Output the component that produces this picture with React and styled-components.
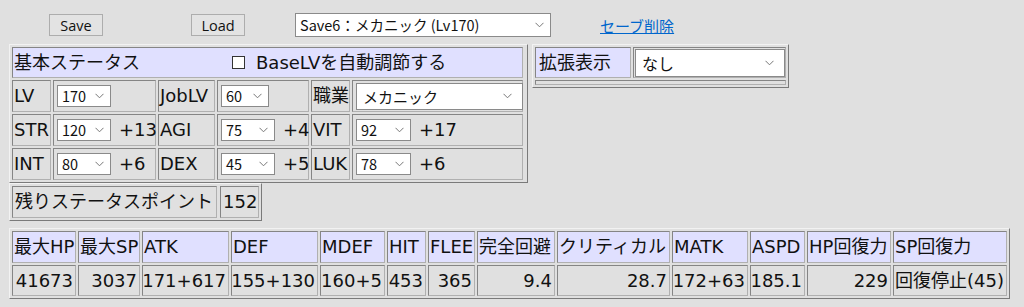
import React from 'react'
import styled, { createGlobalStyle, css } from 'styled-components'

const GlobalStyle = createGlobalStyle`
  body {
    margin: 0;
    background: #e0e0e0;
    font-family: "DejaVu Sans", "Noto Sans CJK JP", sans-serif;
    color: #111;
  }
`

// cell / table borders in the old border="1" look
const insetBorder = css`
  border: 1px solid;
  border-color: #858585 #b0b0b0 #b0b0b0 #858585;
`
const outsetBorder = css`
  border: 1px solid;
  border-color: #f2f2f2 #7a7a7a #7a7a7a #f2f2f2;
`

const Page = styled.div`
  padding-top: 13px;
`

const TopBar = styled.div`
  display: flex;
  align-items: center;
  height: 24px;
  padding-left: 49px;
`

const Button = styled.button`
  box-sizing: border-box;
  width: 54px;
  height: 22px;
  margin-right: ${p => p.gap}px;
  padding: 0;
  background: #e3e3e3;
  border: 1px solid #adadad;
  font-family: "Open Sans", sans-serif;
  font-size: 14.5px;
  color: #111;
`

const SelectBox = styled.div`
  box-sizing: border-box;
  display: flex;
  align-items: center;
  justify-content: space-between;
  width: ${p => p.w}px;
  height: ${p => p.h}px;
  padding: 0 ${p => (p.big ? 10 : 6)}px 0 ${p => (p.big ? 6 : 4)}px;
  background: #fff;
  border: 1px solid #8a8a8a;
  font-family: ${p => (p.num ? '"DejaVu Sans"' : '"Noto Sans CJK JP"')}, sans-serif;
  font-size: ${p => p.fs}px;
  line-height: 1;
  white-space: nowrap;
  flex-shrink: 0;
`

const Chevron = () => (
  <svg width="9" height="6" viewBox="0 0 9 6">
    <polyline points="0.5,0.8 4.5,4.8 8.5,0.8" fill="none" stroke="#777" strokeWidth="1" />
  </svg>
)

const Select = ({ value, w, h = 22, fs = 14.5, num, big }) => (
  <SelectBox w={w} h={h} fs={fs} num={num} big={big}>
    <span>{value}</span>
    <Chevron />
  </SelectBox>
)

const Link = styled.a`
  margin-left: 49px;
  color: #0066cc;
  text-decoration: underline;
  font-family: "Noto Sans CJK JP", sans-serif;
  font-size: 15px;
  cursor: pointer;
`

const Row = styled.div`
  display: flex;
  align-items: flex-start;
  gap: 4px;
  margin-top: 7px;
  padding-left: 9px;
`

const Column = styled.div`
  display: flex;
  flex-direction: column;
  align-items: flex-start;
`

const Panel = styled.div`
  ${outsetBorder};
  display: grid;
  grid-template-columns: ${p => p.cols};
  grid-template-rows: ${p => p.rows};
  gap: 2px ${p => p.colGap || 2}px;
  padding: 2px ${p => p.padRight || 2}px 2px 2px;
  font-size: 18px;
`

const Cell = styled.div`
  ${insetBorder};
  box-sizing: border-box;
  display: flex;
  align-items: center;
  gap: ${p => p.gap || 0}px;
  padding: 0 ${p => p.padR || 1}px 0 ${p => p.padL || 1}px;
  background: ${p => (p.head ? '#e0e0ff' : 'transparent')};
  justify-content: ${p => (p.right ? 'flex-end' : 'flex-start')};
  white-space: nowrap;
  line-height: 1;
  grid-column: ${p => p.span || 'auto'};
`

const Checkbox = styled.span`
  box-sizing: border-box;
  display: inline-block;
  width: 13px;
  height: 13px;
  margin: 0 11px 0 92px;
  background: #fff;
  border: 1px solid #333;
`

const statRows = [
  [['LV', <Select value="170" w={54} />], ['JobLV', <Select value="60" w={48} />], ['職業', null]],
  [['STR', <Select value="120" w={54} />, '+13'], ['AGI', <Select value="75" w={54} />, '+4'], ['VIT', <Select value="92" w={55} />, '+17']],
  [['INT', <Select value="80" w={54} />, '+6'], ['DEX', <Select value="45" w={54} />, '+5'], ['LUK', <Select value="78" w={55} />, '+6']],
]

const params = [
  ['最大HP', '41673', 64],
  ['最大SP', '3037', 62],
  ['ATK', '171+617', 87],
  ['DEF', '155+130', 87],
  ['MDEF', '160+5', 65],
  ['HIT', '453', 39],
  ['FLEE', '365', 47],
  ['完全回避', '9.4', 78],
  ['クリティカル', '28.7', 113],
  ['MATK', '172+63', 76],
  ['ASPD', '185.1', 55],
  ['HP回復力', '229', 84],
  ['SP回復力', '回復停止(45)', 114],
]

export default function App() {
  return (
    <Page>
      <GlobalStyle />
      <TopBar>
        <Button gap={88}>Save</Button>
        <Button gap={50}>Load</Button>
        <Select value="Save6：メカニック (Lv170)" w={256} h={24} fs={14.5} />
        <Link>セーブ削除</Link>
      </TopBar>

      <Row>
        <Column>
          <Panel cols="39px 103px 57px 92px 39px 171px" rows="31px 32px 32px 32px" padRight={4}>
            <Cell head span="1 / -1">
              基本ステータス
              <Checkbox />
              BaseLVを自動調節する
            </Cell>
            {statRows.map((row, i) =>
              row.map(([label, sel, bonus], j) => (
                <React.Fragment key={`${i}-${j}`}>
                  <Cell>{label}</Cell>
                  {sel ? (
                    <Cell padL={3} gap={8}>
                      {sel}
                      {bonus}
                    </Cell>
                  ) : (
                    <Cell padL={3}>
                      <Select value="メカニック" w={167} h={27} fs={15} big />
                    </Cell>
                  )}
                </React.Fragment>
              ))
            )}
          </Panel>

          <Panel cols="205px 39px" rows="32px" colGap={3}>
            <Cell padL={2}>残りステータスポイント</Cell>
            <Cell padL={2}>152</Cell>
          </Panel>
        </Column>

        <Panel cols="96px 153px" rows="31px 5px">
          <Cell head padL={3}>拡張表示</Cell>
          <Cell padL={1}>
            <Select value="なし" w={150} h={28} fs={16} big />
          </Cell>
          <Cell span="1 / -1" />
        </Panel>
      </Row>

      <Row>
        <Panel cols={params.map(p => `${p[2]}px`).join(' ')} rows="32px 31px">
          {params.map(([name]) => (
            <Cell head padL={1} key={name}>{name}</Cell>
          ))}
          {params.map(([name, value]) => (
            <Cell right padR={2} key={`${name}-v`}>{value}</Cell>
          ))}
        </Panel>
      </Row>
    </Page>
  )
}
